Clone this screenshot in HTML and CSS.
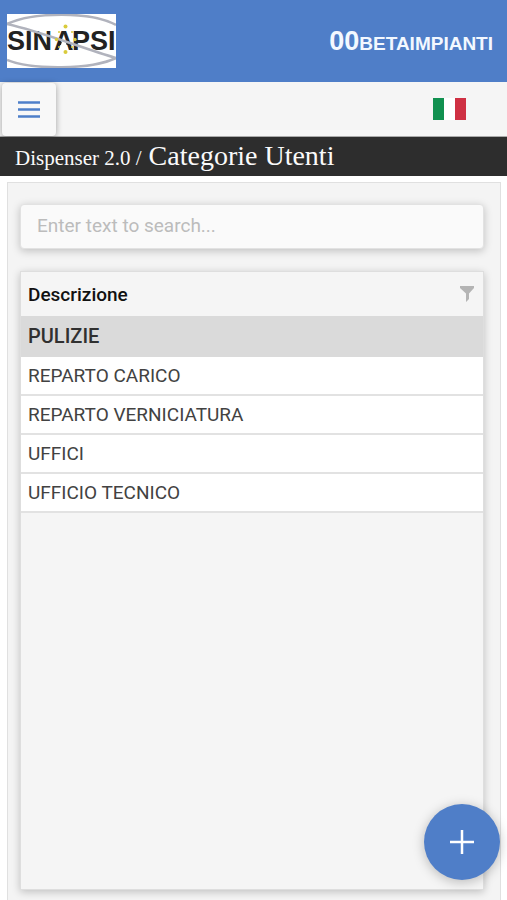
FILE: index.html
```html
<!DOCTYPE html>
<html lang="it">
<head>
<meta charset="utf-8">
<meta name="viewport" content="width=device-width, initial-scale=1">
<title>Categorie Utenti</title>
<link rel="stylesheet" href="styles.css">
</head>
<body>
<header class="header">
  <svg class="logo" viewBox="0 0 109 54" role="img" aria-label="SINAPSI">
    <rect width="109" height="54" fill="#fff"/>
    <text class="logo-text" y="36"><tspan x="0">SIN</tspan><tspan x="47">A</tspan><tspan x="65">PSI</tspan></text>
    <path d="M52 37L56.750 22L61.500 37Z" fill="#fff"/>
    <g fill="none" stroke="#b1b3bd" stroke-width="2.500">
      <path d="M0 10C25 -2 84 -3 109 11M0 46C25 56 84 56 109 44"/>
      <path d="M0 10C32 17 75 34 109 44"/>
    </g>
    <g fill="#d9cb3c">
      <circle cx="58.500" cy="12.500" r="2"/><circle cx="58.500" cy="38" r="2"/>
      <circle cx="49.500" cy="25.500" r="1.700"/><circle cx="68" cy="25.500" r="1.700"/>
      <circle cx="52" cy="18" r="1"/><circle cx="65" cy="18" r="1"/>
      <circle cx="52" cy="33" r="1"/><circle cx="65" cy="33" r="1"/>
    </g>
  </svg>
  <div class="company"><span class="company-code">00</span>BETAIMPIANTI</div>
</header>
<nav class="toolbar">
  <button class="menu" type="button" aria-label="Menu">
    <svg width="22" height="17" viewBox="0 0 22 17"><path d="M0 1.500H22M0 8.500H22M0 15.500H22" stroke="#4e7fc9" stroke-width="2.500"/></svg>
  </button>
  <button class="language" type="button" aria-label="Italiano">
    <svg width="33" height="22" viewBox="0 0 33 22"><path fill="#119150" d="M0 0h11v22H0z"/><path fill="#fff" d="M11 0h11v22H11z"/><path fill="#cf3043" d="M22 0h11v22H22z"/></svg>
  </button>
</nav>
<div class="breadcrumb"><span>Dispenser 2.0 /</span><h1>Categorie Utenti</h1></div>
<main class="panel">
  <input class="search" type="search" aria-label="Search" placeholder="Enter text to search...">
  <section class="grid">
    <table>
      <thead>
        <tr><th scope="col"><div class="column-head">Descrizione
          <button class="filter" type="button" aria-label="Filter"><svg width="14" height="16" viewBox="0 0 14 16"><path d="M0 0H14V2L9 7.500V13L6 16V7.500L0 2Z" fill="#b4b4b4"/></svg></button>
        </div></th></tr>
      </thead>
      <tbody>
        <tr class="selected"><td>PULIZIE</td></tr>
        <tr><td>REPARTO CARICO</td></tr>
        <tr><td>REPARTO VERNICIATURA</td></tr>
        <tr><td>UFFICI</td></tr>
        <tr><td>UFFICIO TECNICO</td></tr>
      </tbody>
    </table>
  </section>
</main>
<button class="add" type="button" aria-label="Add"><svg width="26" height="26" viewBox="0 0 26 26"><path d="M13 1V25M1 13H25" stroke="#fff" stroke-width="2.500"/></svg></button>
</body>
</html>
```
FILE: styles.css
```css
* { box-sizing: border-box; }
body {
  margin: 0;
  height: 100vh;
  display: flex;
  flex-direction: column;
  background: #fff;
  font-family: Roboto, sans-serif;
  font-size: 19px;
  color: #424242;
}
button { border: 0; padding: 0; background: none; }
svg { display: block; }
.header {
  flex: none;
  height: 82px;
  padding: 0 14px 0 7px;
  display: flex;
  align-items: center;
  justify-content: space-between;
  background: #4f7ec8;
}
.logo { width: 109px; height: 54px; }
.logo-text { font: bold 27px "Liberation Sans", sans-serif; fill: #222; }
.company { font: bold 19px "Liberation Sans", sans-serif; color: #f3f8ff; }
.company-code { font-size: 27px; }
.toolbar {
  flex: none;
  height: 55px;
  padding-right: 41px;
  display: flex;
  align-items: center;
  justify-content: space-between;
  background: #f5f5f5;
  border-bottom: 1px solid #aaa;
}
.menu {
  width: 54px;
  height: 53px;
  margin-left: 2px;
  display: grid;
  place-items: center;
  border-radius: 4px;
  background: #f8f8f8;
  box-shadow: 0 1px 6px rgba(0, 0, 0, 0.35);
}
.breadcrumb {
  flex: none;
  height: 39px;
  padding: 0 15px;
  display: flex;
  align-items: baseline;
  gap: 7px;
  background: #2d2d2d;
  color: #fafafa;
  font: 21px/38px "Liberation Serif", serif;
}
.breadcrumb h1 { margin: 0; font-size: 28px; font-weight: normal; }
.panel {
  flex: 1;
  margin: 6px 6px 0 7px;
  padding: 21px 16px 10px 12px;
  display: flex;
  flex-direction: column;
  gap: 22px;
  background: #f4f4f4;
  border: 1px solid #e0e0e0;
  border-bottom: 0;
}
.search {
  width: 100%;
  height: 45px;
  padding: 0 16px 2px;
  border: 1px solid #e2e2e2;
  border-radius: 4px;
  background: #fafafa;
  box-shadow: 0 2px 8px rgba(0, 0, 0, 0.22);
  font: 19px Roboto, sans-serif;
  appearance: none;
}
.search::placeholder { color: #bcbcbc; }
.grid {
  flex: 1;
  border: 1px solid #dedede;
  background: #f5f5f5;
  box-shadow: 0 2px 8px rgba(0, 0, 0, 0.22);
}
table { width: 100%; border-collapse: collapse; }
th {
  height: 44px;
  padding: 0 9px 0 7px;
  font-weight: 500;
  color: #111;
  text-align: left;
}
.column-head { display: flex; align-items: center; justify-content: space-between; }
td { height: 39px; padding: 0 7px; background: #fff; border-bottom: 2px solid #e2e2e2; }
.selected td { height: 40px; background: #dadada; border-color: #dadada; font-size: 20px; font-weight: 500; color: #303030; }
.add {
  position: fixed;
  right: 7px;
  bottom: 20px;
  width: 76px;
  height: 76px;
  display: grid;
  place-items: center;
  border-radius: 50%;
  background: #4f7ec8;
  box-shadow: 0 2px 12px rgba(0, 0, 0, 0.25);
}
```
